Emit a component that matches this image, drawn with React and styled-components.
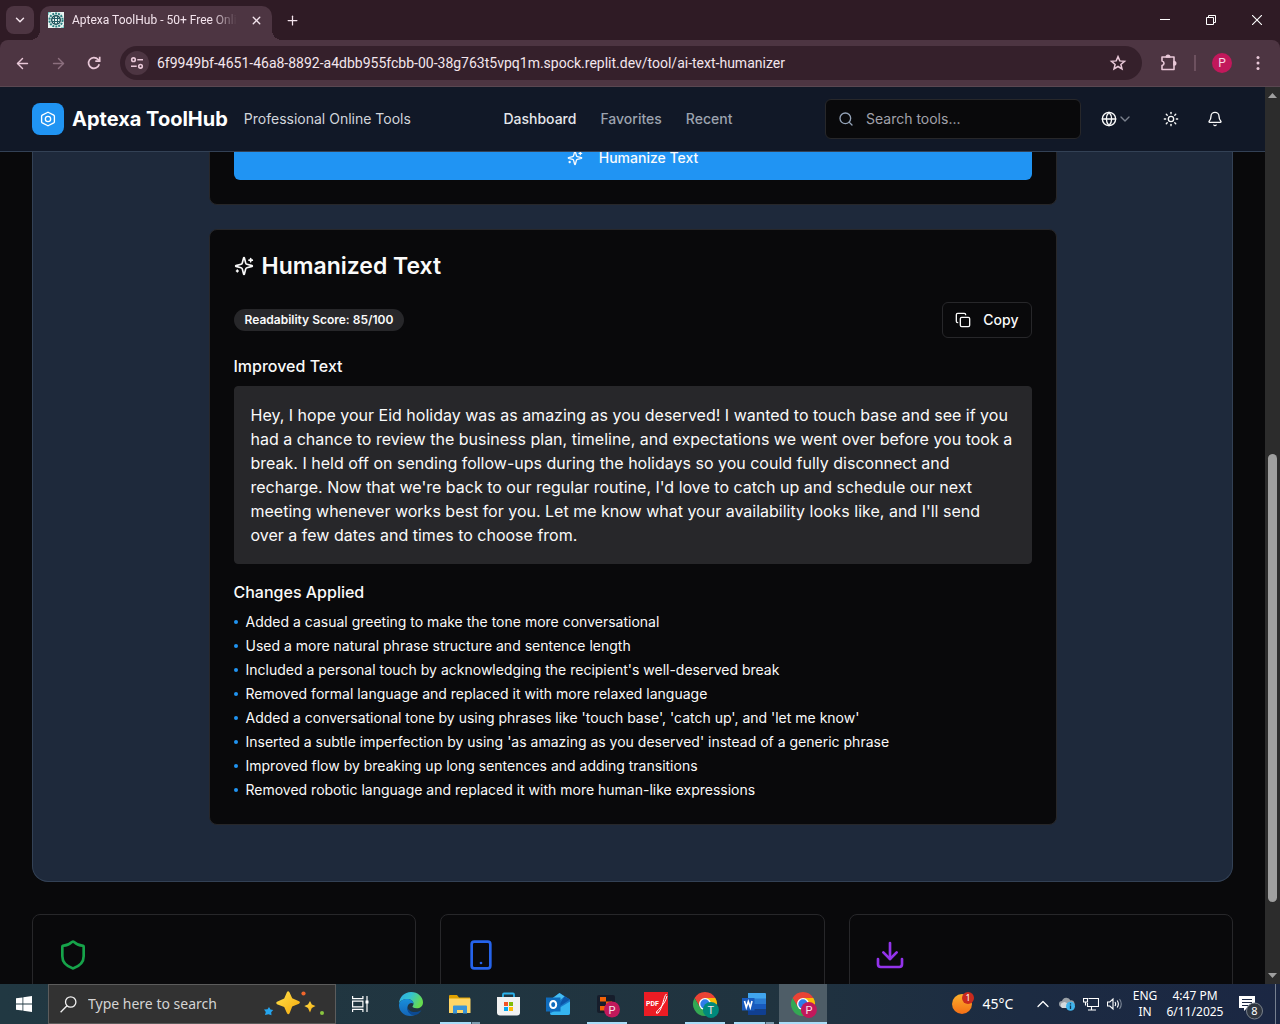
import React from "react";
import styled, { createGlobalStyle } from "styled-components";
import {
  ArrowLeft,
  ArrowRight,
  Bell,
  ChevronDown,
  ChevronUp,
  Copy,
  Download,
  Globe,
  Plus,
  Search,
  Shield,
  Smartphone,
  Sun,
  X,
} from "lucide-react";

const ui = `"Noto Sans", "Open Sans", sans-serif`;
const chrome = `Roboto, "Noto Sans", sans-serif`;
const inter = `Inter, "Liberation Sans", sans-serif`;

const GlobalStyle = createGlobalStyle`
  *, *::before, *::after { box-sizing: border-box; }
  body { margin: 0; background: #09090b; }
  h1, h2, h3, p, ul { margin: 0; padding: 0; }
  button, input { font: inherit; color: inherit; }
  button { cursor: pointer; }
  svg { display: block; flex: none; }
`;

const Screen = styled.div`
  display: flex;
  flex-direction: column;
  height: 100vh;
  overflow: hidden;
  background: #2f1b25;
`;

/* ---------- browser ---------- */

const TabStrip = styled.div`
  display: flex;
  align-items: center;
  height: 40px;
  flex: none;
  padding-left: 6px;
  color: #f3e3ec;
  font: 12px/16px ${chrome};
`;

const PlainButton = styled.button`
  display: flex;
  align-items: center;
  justify-content: center;
  flex: none;
  width: ${(p) => p.$w || 36}px;
  height: ${(p) => p.$h || 28}px;
  padding: 0;
  border: 0;
  border-radius: ${(p) => p.$radius || 0}px;
  background: ${(p) => p.$bg || "transparent"};
  color: ${(p) => p.$color || "inherit"};
`;

const Tab = styled.div`
  position: relative;
  display: flex;
  align-items: center;
  align-self: flex-end;
  width: 232px;
  height: 34px;
  margin-left: 6px;
  padding: 0 8px 6px;
  border-radius: 10px 10px 0 0;
  background: #4d3542;

  &::before,
  &::after {
    content: "";
    position: absolute;
    bottom: 0;
    width: 10px;
    height: 10px;
  }
  &::before {
    right: 100%;
    background: radial-gradient(circle at 0 0, transparent 10px, #4d3542 10px);
  }
  &::after {
    left: 100%;
    background: radial-gradient(circle at 100% 0, transparent 10px, #4d3542 10px);
  }
`;

const TabTitle = styled.span`
  margin-left: 8px;
  white-space: nowrap;
  mask-image: linear-gradient(to right, #000 85%, transparent);
`;

const CloseTab = styled(PlainButton)`
  margin-left: auto;
`;

const WindowButtons = styled.div`
  display: flex;
  margin-left: auto;
  color: #fff;
`;

const Toolbar = styled.div`
  display: flex;
  align-items: center;
  height: 47px;
  flex: none;
  padding: 0 4px;
  border-bottom: 1px solid #5a4751;
  border-radius: 8px 8px 0 0;
  background: #4d3542;
  color: #e9c8d8;
`;

const AddressBar = styled.label`
  display: flex;
  align-items: center;
  flex: 1;
  height: 34px;
  margin: 0 8px;
  padding: 0 6px 0 5px;
  border-radius: 17px;
  background: #35202b;
`;

const AddressInput = styled.input`
  flex: 1;
  min-width: 0;
  height: 24px;
  margin-left: 8px;
  padding: 0;
  border: 0;
  outline: 0;
  background: transparent;
  color: #f3e6ed;
  font: 14px/24px ${chrome};
`;

const ToolbarDivider = styled.span`
  width: 2px;
  height: 16px;
  margin: 0 8px;
  background: #6d515f;
`;

const Avatar = styled.span`
  display: flex;
  align-items: center;
  justify-content: center;
  width: 20px;
  height: 20px;
  border-radius: 50%;
  background: #c2185b;
  color: #f8d7e5;
  font: 12px/16px ${chrome};
`;

const Viewport = styled.div`
  display: flex;
  flex: 1;
  min-height: 0;
`;

const Page = styled.div`
  flex: 1;
  min-width: 0;
  overflow: hidden;
  background: #09090b;
  color: #fafafa;
  font: 16px/24px ${inter};
`;

const Scrollbar = styled.div`
  display: flex;
  flex-direction: column;
  align-items: center;
  width: 15px;
  background: #2c2c2c;
  color: #9f9f9f;
`;

const ScrollArrow = styled.span`
  display: flex;
  align-items: center;
  justify-content: center;
  height: 17px;
  flex: none;
`;

const ScrollSpace = styled.span`
  flex: ${(p) => p.$share} 1 0;
`;

const ScrollThumb = styled.span`
  flex: 448 1 0;
  width: 9px;
  border-radius: 5px;
  background: #9f9f9f;
`;

/* ---------- site ---------- */

const SiteHeader = styled.header`
  position: relative;
  z-index: 1;
  display: flex;
  align-items: center;
  justify-content: space-between;
  height: 65px;
  padding: 0 32px;
  border-bottom: 1px solid #334155;
  background: #111827;
  font-size: 14px;
  line-height: 20px;
`;

const Group = styled.div`
  display: flex;
  align-items: center;
  gap: ${(p) => p.$gap || 8}px;
`;

const LogoMark = styled.span`
  display: flex;
  align-items: center;
  justify-content: center;
  width: 32px;
  height: 32px;
  border-radius: 8px;
  background: #2094f3;
`;

const SiteName = styled.h1`
  color: #fff;
  font-size: 20px;
  font-weight: 700;
  line-height: 28px;
`;

const Tagline = styled.span`
  margin-left: 8px;
  color: #d1d5db;
`;

const SiteNav = styled.nav`
  display: flex;
  gap: 24px;
`;

const NavLink = styled.a`
  color: ${(p) => (p.$active ? "#e5e7eb" : "#9ca3af")};
  font-weight: 500;
  text-decoration: none;
`;

const SearchBox = styled.label`
  display: flex;
  align-items: center;
  gap: 12px;
  width: 256px;
  height: 40px;
  padding: 0 12px;
  border: 1px solid #27272a;
  border-radius: 6px;
  background: #09090b;
  color: #94a3b8;
`;

const SearchInput = styled.input`
  flex: 1;
  min-width: 0;
  padding: 0;
  border: 0;
  outline: 0;
  background: transparent;
  &::placeholder {
    color: #a1a1aa;
    opacity: 1;
  }
`;

const Content = styled.main`
  margin-top: -41px;
  padding: 0 32px;
`;

const ToolPanel = styled.section`
  padding: 32px 24px;
  border: 1px solid #334155;
  border-top: 0;
  border-radius: 0 0 16px 16px;
  background: #1e293b;
`;

const ToolColumn = styled.div`
  display: flex;
  flex-direction: column;
  gap: 24px;
  max-width: 848px;
  margin: -8px auto 0;
  padding-bottom: 24px;
`;

const Card = styled.article`
  padding: 24px;
  border: 1px solid #27272a;
  border-radius: 8px;
  background: #09090b;
`;

const FormCard = styled(Card)`
  padding-top: 0;
`;

const PrimaryButton = styled.button`
  display: flex;
  align-items: center;
  justify-content: center;
  gap: 16px;
  width: 100%;
  height: 44px;
  border: 0;
  border-radius: 6px;
  background: #2094f3;
  color: #f8fafc;
  font-size: 14px;
  font-weight: 500;
`;

const CardTitle = styled.h2`
  display: flex;
  align-items: center;
  gap: 8px;
  margin-bottom: 24px;
  font-size: 23px;
  font-weight: 600;
  line-height: 24px;
`;

const ScoreRow = styled.div`
  display: flex;
  align-items: center;
  justify-content: space-between;
`;

const Badge = styled.span`
  padding: 3px 11px;
  border-radius: 11px;
  background: #27272a;
  font-size: 12px;
  font-weight: 600;
  line-height: 16px;
`;

const OutlineButton = styled.button`
  display: flex;
  align-items: center;
  gap: 12px;
  height: 36px;
  padding: 0 12px;
  border: 1px solid #27272a;
  border-radius: 6px;
  background: transparent;
  font-size: 14px;
  font-weight: 500;
`;

const SectionTitle = styled.h3`
  margin: 16px 0 8px;
  font-size: 16px;
  font-weight: 500;
  line-height: 24px;
`;

const ResultText = styled.p`
  padding: 16px;
  border: 1px solid #27272a;
  border-radius: 4px;
  background: #27272a;
`;

const ChangeList = styled.ul`
  display: flex;
  flex-direction: column;
  gap: 4px;
  list-style: none;
  font-size: 14px;
  line-height: 20px;
`;

const ChangeItem = styled.li`
  display: flex;
  align-items: center;
  gap: 8px;
  &::before {
    content: "";
    width: 4px;
    height: 4px;
    border-radius: 50%;
    background: #2094f3;
  }
`;

const FeatureGrid = styled.div`
  display: grid;
  grid-template-columns: repeat(3, 1fr);
  gap: 24px;
  margin-top: 32px;
`;

const FeatureCard = styled(Card)`
  min-height: 160px;
  color: ${(p) => p.$color};
`;

/* ---------- desktop taskbar ---------- */

const Taskbar = styled.footer`
  display: flex;
  height: 40px;
  flex: none;
  background: linear-gradient(to right, #213842, #20333f 60%, #1c2b42 80%, #1b2743);
  color: #fff;
  font: 12px/16px ${ui};
`;

const TaskSearch = styled.label`
  display: flex;
  align-items: center;
  width: 288px;
  padding: 0 10px 0 11px;
  border: 1px solid #5c5c5c;
  background: #323232;
`;

const TaskSearchInput = styled.input`
  flex: 1;
  min-width: 0;
  margin-left: 11px;
  padding: 0;
  border: 0;
  outline: 0;
  background: transparent;
  font: 14px/20px ${ui};
  &::placeholder {
    color: #d4d4d4;
    opacity: 1;
  }
`;

const TaskApps = styled.div`
  display: flex;
  gap: 1px;
  margin-left: 3px;
`;

const TaskApp = styled.button`
  position: relative;
  display: flex;
  align-items: center;
  justify-content: center;
  width: 48px;
  padding: 0;
  border: 0;
  background: ${(p) => (p.$state === "active" ? "#4e5d67" : "transparent")};

  &::after {
    content: "";
    position: absolute;
    bottom: 0;
    left: ${(p) => (p.$state === "active" ? 0 : 4)}px;
    right: ${(p) => (p.$state === "active" ? 0 : 4)}px;
    height: 2px;
    background: ${(p) =>
      p.$state === "multi"
        ? "linear-gradient(to right, #a9def9 31px, #3d5563 31px, #3d5563 32px, #7d9db0 32px)"
        : p.$state
        ? "#a9def9"
        : "transparent"};
  }
`;

const Tray = styled.div`
  display: flex;
  align-items: center;
  margin-left: auto;
`;

const TrayButton = styled.button`
  display: flex;
  align-items: center;
  justify-content: center;
  gap: 8px;
  width: ${(p) => p.$w}px;
  height: 40px;
  padding: 0;
  border: 0;
  background: transparent;
  text-align: center;
  white-space: nowrap;
`;

const Temperature = styled.span`
  font-size: 14px;
`;

const ShowDesktop = styled.button`
  width: 5px;
  height: 40px;
  padding: 0;
  border: 0;
  border-left: 1px solid #76808f;
  background: transparent;
`;

/* ---------- drawings ---------- */

const Sparkles = ({ size }) => (
  <svg width={size} height={size} viewBox="0 0 24 24" fill="none" stroke="currentColor" strokeWidth="2" strokeLinecap="round" strokeLinejoin="round" aria-hidden="true">
    <path d="M9.937 15.5A2 2 0 0 0 8.5 14.063l-6.135-1.582a.5.5 0 0 1 0-.962L8.5 9.936A2 2 0 0 0 9.937 8.5l1.582-6.135a.5.5 0 0 1 .963 0L14.063 8.5A2 2 0 0 0 15.5 9.937l6.135 1.581a.5.5 0 0 1 0 .964L15.5 14.063a2 2 0 0 0-1.437 1.437l-1.582 6.135a.5.5 0 0 1-.963 0z" />
    <path d="M20 3v4M22 5h-4M4 17v2M5 18H3" />
  </svg>
);

const HexLogo = () => (
  <svg width="16" height="16" viewBox="0 0 24 24" fill="none" stroke="#fff" strokeWidth="2" strokeLinejoin="round" aria-hidden="true">
    <path d="M12.9 2.2 20.6 6.3a2 2 0 0 1 1 1.7v8a2 2 0 0 1-1 1.7l-7.7 4.1a2 2 0 0 1-1.8 0l-7.7-4.1a2 2 0 0 1-1-1.7V8a2 2 0 0 1 1-1.7l7.7-4.1a2 2 0 0 1 1.8 0z" />
    <circle cx="12" cy="12" r="4" />
  </svg>
);

const Favicon = () => (
  <svg width="16" height="16" viewBox="0 0 16 16" fill="none" aria-hidden="true">
    <rect width="16" height="16" fill="#e9f5f3" />
    <circle cx="8" cy="8" r="6.6" stroke="#2a7f80" strokeWidth="2" strokeDasharray="2 1" />
    <circle cx="8" cy="8" r="4.3" stroke="#184c55" strokeWidth="1.4" />
    <path d="M4 6.5h8M4 9.5h8M6.5 4v8M9.5 4v8" stroke="#245c64" />
    <path d="M0 3V0h3M13 16h3v-3" stroke="#35aaa4" />
  </svg>
);

const Reload = () => (
  <svg width="16" height="16" viewBox="0 0 16 16" fill="none" stroke="currentColor" strokeWidth="1.7" aria-hidden="true">
    <path d="M13.2 9.2A5.4 5.4 0 1 1 12 4.4L13.6 6" />
    <path d="M13.7 1.8v4.4H9.3" />
  </svg>
);

const SiteSettings = () => (
  <svg width="14" height="14" viewBox="0 0 14 14" fill="none" stroke="currentColor" strokeWidth="1.6" aria-hidden="true">
    <circle cx="3.5" cy="3.7" r="1.8" />
    <path d="M7.3 3.7H13M1 10.3h5.7" />
    <circle cx="10.5" cy="10.3" r="1.8" />
  </svg>
);

const StarIcon = () => (
  <svg width="18" height="18" viewBox="0 0 18 18" fill="none" stroke="currentColor" strokeWidth="1.5" aria-hidden="true">
    <path d="m9 2.6 1.8 4.3 4.7.4-3.6 3.1 1.1 4.6L9 12.5 5 15l1.1-4.6-3.6-3.1 4.7-.4z" />
  </svg>
);

const PuzzleIcon = () => (
  <svg width="18" height="18" viewBox="0 0 18 18" fill="none" stroke="currentColor" strokeWidth="1.6" strokeLinejoin="round" aria-hidden="true">
    <path d="M3 3h12v12.500H3v-4q2-.5 2-2.200T3 7z" />
    <path d="M7.300 3a1.700 1.700 0 0 1 3.400 0zM15 7.600a1.700 1.700 0 0 1 0 3.400z" fill="currentColor" />
  </svg>
);

const DotsIcon = () => (
  <svg width="4" height="16" viewBox="0 0 4 16" fill="currentColor" aria-hidden="true">
    <circle cx="2" cy="2.500" r="1.500" />
    <circle cx="2" cy="8" r="1.500" />
    <circle cx="2" cy="13.500" r="1.500" />
  </svg>
);

const MinimizeIcon = () => (
  <svg width="10" height="10" viewBox="0 0 10 10" stroke="currentColor" aria-hidden="true">
    <path d="M0 4.5h10" />
  </svg>
);

const RestoreIcon = () => (
  <svg width="10" height="10" viewBox="0 0 10 10" fill="none" stroke="currentColor" aria-hidden="true">
    <path d="M.5 2.500h7v7h-7zM2.500 2.500v-2h7v7h-2" />
  </svg>
);

const CloseIcon = () => (
  <svg width="10" height="10" viewBox="0 0 10 10" stroke="currentColor" strokeWidth="1.100" aria-hidden="true">
    <path d="m0 0 10 10M10 0 0 10" />
  </svg>
);

const Triangle = ({ down }) => (
  <svg width="9" height="5" viewBox="0 0 9 5" fill="currentColor" aria-hidden="true">
    <path d={down ? "M0 0h9L4.500 5z" : "M0 5h9L4.500 0z"} />
  </svg>
);

const WindowsLogo = () => (
  <svg width="16" height="16" viewBox="0 0 16 16" fill="#fff" aria-hidden="true">
    <path d="M0 2.300 6.500 1.400v6.200H0zM7.300 1.300 16 0v7.600H7.300zM0 8.400h6.500v6.200L0 13.700zM7.300 8.400H16V16l-8.700-1.300z" />
  </svg>
);

const TaskSearchIcon = () => (
  <svg width="17" height="17" viewBox="0 0 17 17" fill="none" stroke="#f0f0f0" strokeWidth="1.300" aria-hidden="true">
    <circle cx="10.700" cy="6" r="5.200" />
    <path d="M7 9.800.600 16.300" />
  </svg>
);

const SearchStars = () => (
  <svg width="62" height="26" viewBox="0 0 62 26" aria-hidden="true">
    <defs>
      <linearGradient id="gold" x1="0" y1="0" x2="1" y2="1">
        <stop offset="0" stopColor="#ffe14a" />
        <stop offset="1" stopColor="#f5a80c" />
      </linearGradient>
    </defs>
    <path fill="url(#gold)" d="M24 1q1.200-1.500 2.600.500l2.600 5.800 6.800 3q1.800 1.200 0 2.400l-6.800 2.800-2.600 6.800q-1.200 1.800-2.600 0L21.200 16 14 13.200q-1.500-1.200 0-2.400l7.200-3.300z" />
    <path fill="url(#gold)" d="m47 10 1.800 3.600L52.500 15l-3.700 2-1.800 4.500-2-4.500-3.700-2 3.700-1.500z" />
    <path fill="#25a5ee" d="m6 16 1.500 2.500 2.700.5-2 2.300.300 3-3-1L2 24l.800-3L1 18.500l3.500-.3z" />
    <circle cx="40.500" cy="2.500" r="2.100" fill="#f0662c" />
    <circle cx="59" cy="22" r="2" fill="#8ac53f" />
  </svg>
);

const TaskViewIcon = () => (
  <svg width="17" height="16" viewBox="0 0 17 16" fill="none" stroke="#fff" strokeWidth="1.200" aria-hidden="true">
    <path d="M.600 0v2.600h10.300V0M.600 16v-2.600h10.300V16M.600 5.100h10.300v5.800H.600zM15 0v16" />
    <path d="M13.500 4.500h3v3h-3z" fill="#fff" stroke="none" />
  </svg>
);

const EdgeIcon = () => (
  <svg width="24" height="24" viewBox="0 0 24 24" aria-hidden="true">
    <defs>
      <linearGradient id="edgeTop" x1="0" y1="0" x2="1" y2=".4">
        <stop offset="0" stopColor="#2ba8e8" />
        <stop offset=".5" stopColor="#35c3cf" />
        <stop offset="1" stopColor="#66dc50" />
      </linearGradient>
      <linearGradient id="edgeLow" x1="0" y1="0" x2="0" y2="1">
        <stop offset="0" stopColor="#188fdb" />
        <stop offset="1" stopColor="#1465b8" />
      </linearGradient>
    </defs>
    <path fill="url(#edgeTop)" d="M0 11.500C.300 5 5.500 0 12 0c7 0 12 5 12 10.200 0 4-3 6-6.200 6-3.400 0-4.600-1.200-4.300-2 .5-.8 1-1.300 1-2.500C14.500 9 11.500 7 8 7 3.500 7 1 9.500 0 11.500z" />
    <path fill="url(#edgeLow)" d="M0 12.500C1 8.500 4.500 7 8 7c3.500 0 6.500 2 6.500 4.700-2-1.500-5.500-.3-6 3.300-.5 4 3 8 7.500 8-9 3.500-16.500-3-16-10.500z" />
    <path fill="#0c4a92" d="M8.500 14.500c0 3.500 4 6 8.500 5.500 2.500-.3 4-1 5.500-2-1.500 3-4 5-7.500 5.300C10.500 23 7.500 19 8.500 14.500z" />
  </svg>
);

const FolderIcon = () => (
  <svg width="22" height="19" viewBox="0 0 22 19" aria-hidden="true">
    <path fill="#e0a100" d="M0 1q0-1 1-1h7l2 2.500h11V6H0z" />
    <path fill="#ffd667" d="M0 3.500h21.500V18H0z" />
    <path fill="#3a95d8" d="M4 18.500v-7q0-1 1-1h12q1 0 1 1v7h-4V15H8v3.500z" />
  </svg>
);

const StoreIcon = () => (
  <svg width="24" height="24" viewBox="0 0 24 24" aria-hidden="true">
    <path fill="none" stroke="#2cb3ec" strokeWidth="1.800" d="M6 6V2.500q0-1 1-1h9q1 0 1 1V6" />
    <path fill="#f1f1f1" d="M0 5h23v15.500q0 3-3 3H3q-3 0-3-3z" />
    <path fill="#f35325" d="M7 10h4v4H7z" />
    <path fill="#81bc06" d="M12 10h4v4h-4z" />
    <path fill="#05a6f0" d="M7 15h4v4H7z" />
    <path fill="#ffba08" d="M12 15h4v4h-4z" />
  </svg>
);

const OutlookIcon = () => (
  <svg width="24" height="22" viewBox="0 0 24 22" aria-hidden="true">
    <path fill="#1a78c8" d="M4 7 13.500 0 24 6.500V20q0 2-2 2H6q-2 0-2-2z" />
    <path fill="#45bdf2" d="M4 7 13.500 0l5 3.500L8 12z" />
    <path fill="#0c56a8" d="m18.500 3.500 5.500 3L11 15z" />
    <path fill="#35b5f0" d="M24 8.500V20q0 2-2 2H6q-1.500 0-2-1.500z" />
    <path fill="#0f6cbd" d="M0 4.500h14.500v14H0z" />
    <ellipse cx="7.200" cy="11.500" rx="3" ry="3.500" fill="none" stroke="#fff" strokeWidth="2" />
  </svg>
);

const BadgeLetter = ({ x, y, fill, children }) => (
  <>
    <circle cx={x} cy={y} r="8" fill={fill} />
    <text x={x} y={y + 4} textAnchor="middle" fill="#f7e3ec" fontSize="11" fontFamily="Roboto, sans-serif">
      {children}
    </text>
  </>
);

const ReplitIcon = () => (
  <svg width="28" height="28" viewBox="0 0 28 28" aria-hidden="true">
    <rect x="4" y="5" width="18" height="18" rx="2" fill="#161d2b" />
    <path fill="#f26207" d="M7 7h6v4.500H7zM13 11.500h6V16h-6zM7 16h6v4.500H7z" />
    <BadgeLetter x={19} y={19.500} fill="#c2185b">P</BadgeLetter>
  </svg>
);

const PdfIcon = () => (
  <svg width="24" height="24" viewBox="0 0 24 24" aria-hidden="true">
    <path fill="#ed1c24" d="M0 0h24v24H0z" />
    <text x="2" y="14" fill="#fff" fontSize="7" fontWeight="700" fontFamily="Roboto, sans-serif">PDF</text>
    <path fill="none" stroke="#fff" strokeWidth="1" d="M22.500 2C19 5 19.500 15 14 21q-2 1-1.500-1C14 17 21 13 23 4" />
  </svg>
);

const ChromeIcon = ({ letter, fill }) => (
  <svg width="28" height="28" viewBox="-1 0 28 28" aria-hidden="true">
    <path fill="#ea4335" d="M2.600 8A12 12 0 0 1 23.400 8H13l-5.200 9z" />
    <path fill="#fbbc05" d="M23.400 8A12 12 0 0 1 13 26l5.200-9L13 8z" />
    <path fill="#34a853" d="M13 26A12 12 0 0 1 2.600 8l5.200 9h10.400z" />
    <circle cx="13" cy="14" r="6" fill="#fff" />
    <circle cx="13" cy="14" r="4.700" fill="#2f7de9" />
    <BadgeLetter x={18.900} y={19.900} fill={fill}>{letter}</BadgeLetter>
  </svg>
);

const WordIcon = () => (
  <svg width="24" height="22" viewBox="0 0 24 22" aria-hidden="true">
    <path fill="#41a5ee" d="M6 0h17q1 0 1 1v5H6z" />
    <path fill="#2b7cd3" d="M6 5.500h18V11H6z" />
    <path fill="#185abd" d="M6 11h18v5.500H6z" />
    <path fill="#103f91" d="M6 16.500h18V21q0 1-1 1H6z" />
    <path fill="#185abd" d="M0 5h12.500v12.500H0z" />
    <path fill="none" stroke="#fff" strokeWidth="1.600" d="m2.500 8 1.800 6.500L6.300 8.500l2 6L10 8" />
  </svg>
);

const WeatherIcon = () => (
  <svg width="24" height="24" viewBox="0 0 24 24" aria-hidden="true">
    <defs>
      <linearGradient id="sunFill" x1="0" y1="0" x2="0" y2="1">
        <stop offset="0" stopColor="#fbb02c" />
        <stop offset="1" stopColor="#f46f16" />
      </linearGradient>
    </defs>
    <circle cx="11" cy="12" r="10" fill="url(#sunFill)" />
    <circle cx="17" cy="6" r="6" fill="#c82a1e" />
    <text x="17" y="9" textAnchor="middle" fill="#fff" fontSize="9" fontFamily="Noto Sans, sans-serif">1</text>
  </svg>
);

const CloudIcon = () => (
  <svg width="16" height="14" viewBox="0 0 16 14" aria-hidden="true">
    <path fill="#9aa0a6" d="M3 10a3 3 0 0 1 0-6 4.500 4.500 0 0 1 8.500-.5A3.300 3.300 0 0 1 13 10z" />
    <path fill="#d5d9dc" d="M3 11a3 3 0 0 1 1-5.500Q7 4 9 8l3 3z" />
    <circle cx="11.500" cy="9.300" r="4.500" fill="#3fb4ec" />
    <path stroke="#10324f" strokeWidth="1.300" d="M11.500 8.500v3.500M11.500 6.300v1.300" />
  </svg>
);

const NetworkIcon = () => (
  <svg width="16" height="14" viewBox="0 0 16 14" fill="none" stroke="#fff" strokeWidth="1.100" aria-hidden="true">
    <path d="M5.500 1.500h10v8h-11V6M8.500 9.500v3M5 13h8M.500 1.500h4V5h-4zM2.500 5v3.500" />
  </svg>
);

const SpeakerIcon = () => (
  <svg width="16" height="14" viewBox="0 0 16 14" fill="none" stroke="#fff" strokeWidth="1.100" aria-hidden="true">
    <path d="M.500 5h2.300L6 2v10L2.800 9H.500zM8 5q1.300 2 0 4M10.200 3.500q2.300 3.500 0 7" />
    <path d="M12.500 2q3.500 5 0 10" stroke="#7f8a99" />
  </svg>
);

const NotificationIcon = () => (
  <svg width="26" height="32" viewBox="0 0 26 32" aria-hidden="true">
    <path fill="#fff" d="M1 8h16v12H9l-3 3v-3H1z" />
    <path stroke="#1b2743" d="M4 11.500h10M4 14.500h10M4 17.500h6" />
    <circle cx="16.500" cy="23" r="8" fill="#2f3640" stroke="#7a828c" />
    <text x="16.500" y="27" textAnchor="middle" fill="#fff" fontSize="11" fontFamily="Noto Sans, sans-serif">8</text>
  </svg>
);

/* ---------- data ---------- */

const changes = [
  "Added a casual greeting to make the tone more conversational",
  "Used a more natural phrase structure and sentence length",
  "Included a personal touch by acknowledging the recipient's well-deserved break",
  "Removed formal language and replaced it with more relaxed language",
  "Added a conversational tone by using phrases like 'touch base', 'catch up', and 'let me know'",
  "Inserted a subtle imperfection by using 'as amazing as you deserved' instead of a generic phrase",
  "Improved flow by breaking up long sentences and adding transitions",
  "Removed robotic language and replaced it with more human-like expressions",
];

const improvedText =
  "Hey, I hope your Eid holiday was as amazing as you deserved! I wanted to touch base and see if you had a chance to review the business plan, timeline, and expectations we went over before you took a break. I held off on sending follow-ups during the holidays so you could fully disconnect and recharge. Now that we're back to our regular routine, I'd love to catch up and schedule our next meeting whenever works best for you. Let me know what your availability looks like, and I'll send over a few dates and times to choose from.";

const features = [
  { icon: Shield, color: "#16a34a" },
  { icon: Smartphone, color: "#2563eb" },
  { icon: Download, color: "#9333ea" },
];

const apps = [
  { name: "Microsoft Edge", icon: <EdgeIcon /> },
  { name: "File Explorer", icon: <FolderIcon />, state: "multi" },
  { name: "Microsoft Store", icon: <StoreIcon /> },
  { name: "Outlook", icon: <OutlookIcon /> },
  { name: "Replit", icon: <ReplitIcon />, state: "open" },
  { name: "PDF reader", icon: <PdfIcon /> },
  { name: "Chrome, profile T", icon: <ChromeIcon letter="T" fill="#00897b" />, state: "open" },
  { name: "Word", icon: <WordIcon />, state: "multi" },
  { name: "Chrome, profile P", icon: <ChromeIcon letter="P" fill="#c2185b" />, state: "active" },
];

/* ---------- sections ---------- */

const BrowserBars = () => (
  <>
    <TabStrip>
      <PlainButton aria-label="Search tabs" $w={28} $radius={8} $bg="#4d3542">
        <ChevronDown size={14} strokeWidth={2.5} />
      </PlainButton>
      <Tab>
        <Favicon />
        <TabTitle>Aptexa ToolHub - 50+ Free Onli</TabTitle>
        <CloseTab aria-label="Close tab" $w={16} $h={20}>
          <X size={13} strokeWidth={2.5} />
        </CloseTab>
      </Tab>
      <PlainButton aria-label="New tab" $w={40}>
        <Plus size={15} />
      </PlainButton>
      <WindowButtons>
        <PlainButton aria-label="Minimize" $w={46} $h={40}><MinimizeIcon /></PlainButton>
        <PlainButton aria-label="Restore" $w={46} $h={40}><RestoreIcon /></PlainButton>
        <PlainButton aria-label="Close" $w={46} $h={40}><CloseIcon /></PlainButton>
      </WindowButtons>
    </TabStrip>
    <Toolbar>
      <PlainButton aria-label="Back"><ArrowLeft size={17} /></PlainButton>
      <PlainButton aria-label="Forward" $color="#8c6f7e"><ArrowRight size={17} /></PlainButton>
      <PlainButton aria-label="Reload"><Reload /></PlainButton>
      <AddressBar>
        <PlainButton aria-label="Site information" $w={24} $h={24} $radius={12} $bg="#4d3542">
          <SiteSettings />
        </PlainButton>
        <AddressInput
          aria-label="Address"
          defaultValue="6f9949bf-4651-46a8-8892-a4dbb955fcbb-00-38g763t5vpq1m.spock.replit.dev/tool/ai-text-humanizer"
        />
        <PlainButton aria-label="Bookmark"><StarIcon /></PlainButton>
      </AddressBar>
      <PlainButton aria-label="Extensions"><PuzzleIcon /></PlainButton>
      <ToolbarDivider />
      <PlainButton aria-label="Profile"><Avatar>P</Avatar></PlainButton>
      <PlainButton aria-label="Menu"><DotsIcon /></PlainButton>
    </Toolbar>
  </>
);

const Header = () => (
  <SiteHeader>
    <Group>
      <LogoMark><HexLogo /></LogoMark>
      <SiteName>Aptexa ToolHub</SiteName>
      <Tagline>Professional Online Tools</Tagline>
    </Group>
    <SiteNav>
      <NavLink href="#dashboard" $active>Dashboard</NavLink>
      <NavLink href="#favorites">Favorites</NavLink>
      <NavLink href="#recent">Recent</NavLink>
    </SiteNav>
    <Group>
      <SearchBox>
        <Search size={16} />
        <SearchInput aria-label="Search tools" placeholder="Search tools..." />
      </SearchBox>
      <PlainButton aria-label="Language" $w={56} $h={36}>
        <Globe size={16} />
        <ChevronDown size={16} color="#7b828e" />
      </PlainButton>
      <PlainButton aria-label="Theme" $h={36}><Sun size={16} /></PlainButton>
      <PlainButton aria-label="Notifications" $h={36}><Bell size={16} /></PlainButton>
    </Group>
  </SiteHeader>
);

const ToolContent = () => (
  <Content>
    <ToolPanel>
      <ToolColumn>
        <FormCard>
          <PrimaryButton><Sparkles size={16} />Humanize Text</PrimaryButton>
        </FormCard>
        <Card>
          <CardTitle><Sparkles size={20} />Humanized Text</CardTitle>
          <ScoreRow>
            <Badge>Readability Score: 85/100</Badge>
            <OutlineButton><Copy size={16} />Copy</OutlineButton>
          </ScoreRow>
          <SectionTitle>Improved Text</SectionTitle>
          <ResultText>{improvedText}</ResultText>
          <SectionTitle>Changes Applied</SectionTitle>
          <ChangeList>
            {changes.map((text) => <ChangeItem key={text}>{text}</ChangeItem>)}
          </ChangeList>
        </Card>
      </ToolColumn>
    </ToolPanel>
    <FeatureGrid>
      {features.map(({ icon: Icon, color }) => (
        <FeatureCard key={color} $color={color}><Icon size={32} /></FeatureCard>
      ))}
    </FeatureGrid>
  </Content>
);

const DesktopBar = () => (
  <Taskbar>
    <PlainButton aria-label="Start" $w={48} $h={40}><WindowsLogo /></PlainButton>
    <TaskSearch>
      <TaskSearchIcon />
      <TaskSearchInput aria-label="Search this computer" placeholder="Type here to search" />
      <SearchStars />
    </TaskSearch>
    <PlainButton aria-label="Task view" $w={48} $h={40}><TaskViewIcon /></PlainButton>
    <TaskApps>
      {apps.map(({ name, icon, state }) => (
        <TaskApp key={name} aria-label={name} $state={state}>{icon}</TaskApp>
      ))}
    </TaskApps>
    <Tray>
      <TrayButton $w={98}><WeatherIcon /><Temperature>45°C</Temperature></TrayButton>
      <TrayButton $w={24} aria-label="Hidden icons"><ChevronUp size={20} strokeWidth={1.5} /></TrayButton>
      <TrayButton $w={24} aria-label="OneDrive"><CloudIcon /></TrayButton>
      <TrayButton $w={24} aria-label="Network"><NetworkIcon /></TrayButton>
      <TrayButton $w={24} aria-label="Volume"><SpeakerIcon /></TrayButton>
      <TrayButton $w={36}>ENG<br />IN</TrayButton>
      <TrayButton $w={64}>4:47 PM<br />6/11/2025</TrayButton>
      <TrayButton $w={48} aria-label="Notifications"><NotificationIcon /></TrayButton>
      <ShowDesktop aria-label="Show desktop" />
    </Tray>
  </Taskbar>
);

export default function App() {
  return (
    <Screen>
      <GlobalStyle />
      <BrowserBars />
      <Viewport>
        <Page>
          <Header />
          <ToolContent />
        </Page>
        <Scrollbar>
          <ScrollArrow><Triangle /></ScrollArrow>
          <ScrollSpace $share={350} />
          <ScrollThumb />
          <ScrollSpace $share={65} />
          <ScrollArrow><Triangle down /></ScrollArrow>
        </Scrollbar>
      </Viewport>
      <DesktopBar />
    </Screen>
  );
}
